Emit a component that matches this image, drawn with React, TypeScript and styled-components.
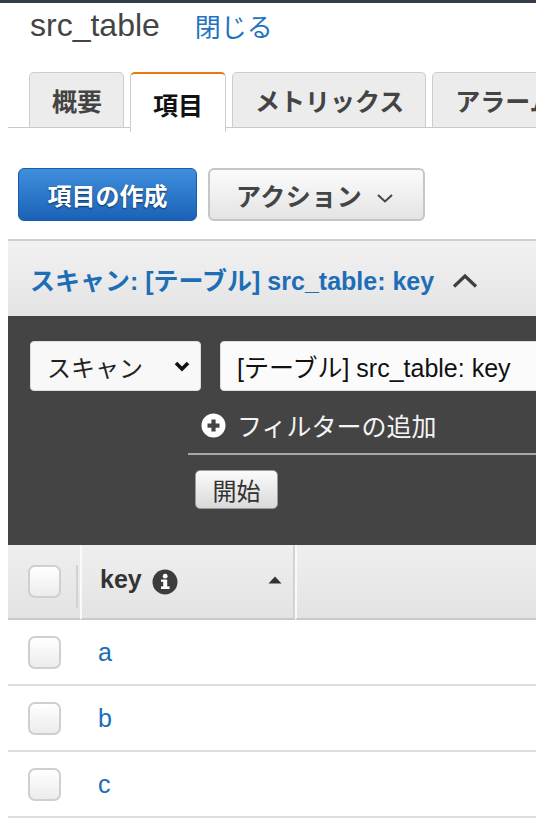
import React from "react";
import styled, { createGlobalStyle } from "styled-components";

const FONT = `"Liberation Sans", "Noto Sans CJK JP", sans-serif`;

const tabs = ["概要", "項目", "メトリックス", "アラーム"];
const items = ["a", "b", "c"];

const ChevronDown: React.FC = () => (
  <svg width="20" height="12" viewBox="0 0 20 12">
    <polyline points="3,3 10,9.5 17,3" fill="none" stroke="#444" strokeWidth="2" />
  </svg>
);

const ChevronUp: React.FC = () => (
  <svg width="26" height="14" viewBox="0 0 26 14">
    <polyline points="2,12.5 13,2 24,12.5" fill="none" stroke="#3f3f3f" strokeWidth="3.2" />
  </svg>
);

const SelectChevron: React.FC = () => (
  <svg width="18" height="12" viewBox="0 0 18 12">
    <polyline points="3,3 9,9 15,3" fill="none" stroke="#111" strokeWidth="3.6" />
  </svg>
);

const PlusCircle: React.FC = () => (
  <svg width="25" height="25" viewBox="0 0 25 25">
    <circle cx="12.5" cy="12.5" r="12" fill="#fff" />
    <rect x="6.5" y="10.5" width="12" height="4.2" fill="#444" />
    <rect x="10.4" y="6.5" width="4.2" height="12" fill="#444" />
  </svg>
);

const InfoIcon: React.FC = () => (
  <svg width="26" height="26" viewBox="0 0 26 26">
    <circle cx="13" cy="13" r="12.5" fill="#3c3c3c" />
    <circle cx="13.2" cy="7.2" r="2.4" fill="#fff" />
    <rect x="11.2" y="10.6" width="4" height="8" fill="#fff" />
    <rect x="9" y="10.6" width="3" height="2.2" fill="#fff" />
    <rect x="9" y="17.4" width="8.6" height="2.6" fill="#fff" />
  </svg>
);

const SortUp: React.FC = () => (
  <svg width="14" height="8" viewBox="0 0 14 8">
    <polygon points="7,0.5 13.5,7.5 0.5,7.5" fill="#333" />
  </svg>
);

const App: React.FC = () => {
  return (
    <Page>
      <GlobalStyle />
      <TopBar />
      <Content>
        <TitleRow>
          <Title>src_table</Title>
          <CloseLink>閉じる</CloseLink>
        </TitleRow>

        <TabBar>
          {tabs.map((tab) => (
            <Tab key={tab} $active={tab === "項目"}>
              {tab}
            </Tab>
          ))}
        </TabBar>

        <ButtonRow>
          <PrimaryButton>項目の作成</PrimaryButton>
          <SecondaryButton>
            アクション
            <ChevronDown />
          </SecondaryButton>
        </ButtonRow>

        <ScanHeader>
          <ScanTitle>スキャン: [テーブル] src_table: key</ScanTitle>
          <ChevronUp />
        </ScanHeader>

        <Panel>
          <QueryRow>
            <Select>
              スキャン
              <SelectChevron />
            </Select>
            <Input>[テーブル] src_table: key</Input>
          </QueryRow>
          <FilterBlock>
            <AddRow>
              <PlusCircle />
              フィルターの追加
            </AddRow>
            <Divider />
            <StartButton>開始</StartButton>
          </FilterBlock>
        </Panel>

        <Table>
          <HeadCell $first>
            <Checkbox />
          </HeadCell>
          <HeadCell>
            <HeadLabel>key</HeadLabel>
            <InfoIcon />
            <SortSlot>
              <SortUp />
            </SortSlot>
          </HeadCell>
          <HeadCell $last />
          {items.map((item) => (
            <React.Fragment key={item}>
              <BodyCell $center>
                <Checkbox />
              </BodyCell>
              <BodyCell>
                <KeyLink>{item}</KeyLink>
              </BodyCell>
              <BodyCell />
            </React.Fragment>
          ))}
        </Table>
      </Content>
    </Page>
  );
};

export default App;

// style
const GlobalStyle = createGlobalStyle`
  html, body {
    margin: 0;
    padding: 0;
    background: #ffffff;
  }

  body {
    font-family: ${FONT};
  }

  * {
    box-sizing: border-box;
  }
`;

const Page = styled.div`
  width: 536px;
  height: 836px;
  overflow: hidden;
`;

const TopBar = styled.div`
  height: 3px;
  background-color: #323b48;
`;

const Content = styled.div`
  padding-left: 8px;
`;

const TitleRow = styled.div`
  height: 44px;
  padding-left: 22px;

  display: flex;
  align-items: center;
  gap: 35px;
`;

const Title = styled.span`
  font-size: 32px;
  color: #444444;
`;

const CloseLink = styled.span`
  font-size: 26px;
  color: #1f73c1;
`;

const TabBar = styled.div`
  margin-top: 25px;
  padding-left: 21px;
  height: 56px;

  display: flex;
  align-items: flex-end;
  gap: 6px;
  border-bottom: 1px solid #c9c9c9;
`;

const Tab = styled.div<{ $active?: boolean }>`
  position: relative;
  flex-shrink: 0;
  height: ${(p) => (p.$active ? "60px" : "55px")};
  margin-bottom: ${(p) => (p.$active ? "-5px" : "0")};
  padding: ${(p) => (p.$active ? "1px 22px 0" : "0 21px 0 22px")};

  display: flex;
  align-items: center;
  white-space: nowrap;

  font-size: 25px;
  font-weight: 700;
  color: ${(p) => (p.$active ? "#111111" : "#444444")};

  background-color: ${(p) => (p.$active ? "#ffffff" : "#ececec")};
  border: 1px solid #cdcdcd;
  border-top: ${(p) => (p.$active ? "2px solid #e8780f" : "1px solid #cdcdcd")};
  border-bottom: none;
  border-radius: 5px 5px 0 0;
`;

const ButtonRow = styled.div`
  margin-top: 40px;
  padding-left: 10px;

  display: flex;
  gap: 11px;
`;

const PrimaryButton = styled.div`
  width: 179px;
  height: 53px;

  display: flex;
  align-items: center;
  justify-content: center;

  font-size: 24px;
  font-weight: 700;
  color: #ffffff;
  text-shadow: 0 1px 2px rgba(0, 0, 0, 0.55);

  background: linear-gradient(#3f8fdd, #1b62b6);
  border: 1px solid #1a5cab;
  border-radius: 6px;
`;

const SecondaryButton = styled.div`
  width: 217px;
  height: 53px;
  padding-left: 26px;

  display: flex;
  align-items: center;
  gap: 13px;

  font-size: 25px;
  font-weight: 700;
  color: #444444;
  letter-spacing: 0.5px;

  background: linear-gradient(#fbfbfb, #e4e4e4);
  border: 2px solid #c6c6c6;
  border-radius: 6px;

  svg {
    margin-top: 6px;
  }
`;

const ScanHeader = styled.div`
  margin-top: 18px;
  height: 77px;
  padding-left: 22px;

  display: flex;
  align-items: center;
  gap: 18px;

  background: linear-gradient(#f1f1f1, #e4e4e4);
  border-top: 2px solid #cfcfcf;

  svg {
    margin-top: 5px;
  }
`;

const ScanTitle = styled.span`
  font-size: 25px;
  font-weight: 700;
  color: #1d6eb6;
  white-space: nowrap;
`;

const Panel = styled.div`
  padding: 25px 0 36px 22px;
  background-color: #444444;
`;

const QueryRow = styled.div`
  display: flex;
  gap: 19px;
`;

const Select = styled.div`
  flex: 0 0 171px;
  height: 50px;
  padding: 0 9px 0 16px;

  display: flex;
  align-items: center;
  justify-content: space-between;

  font-size: 24px;
  color: #222222;

  background-color: #f8f8f8;
  border: 1px solid #dddddd;
  border-radius: 4px;
`;

const Input = styled.div`
  flex: 0 0 340px;
  height: 50px;
  padding-left: 16px;

  display: flex;
  align-items: center;
  white-space: nowrap;

  font-size: 25px;
  color: #111111;

  background-color: #fbfbfb;
  border: 1px solid #dddddd;
  border-radius: 4px;
`;

const FilterBlock = styled.div`
  margin-left: 158px;
`;

const AddRow = styled.div`
  height: 62px;
  padding: 6px 0 0 13px;

  display: flex;
  align-items: center;
  gap: 11px;

  font-size: 25px;
  color: #f4f4f4;
  white-space: nowrap;
`;

const Divider = styled.div`
  height: 2px;
  background-color: #a8a8a8;
`;

const StartButton = styled.div`
  width: 83px;
  height: 39px;
  margin: 15px 0 0 7px;

  display: flex;
  align-items: center;
  justify-content: center;

  font-size: 24px;
  color: #333333;

  background: linear-gradient(#fbfbfb, #d9d9d9);
  border: 1px solid #9c9c9c;
  border-radius: 5px;
`;

const Table = styled.div`
  display: grid;
  grid-template-columns: 72px 215px 1fr;
`;

const HeadCell = styled.div<{ $first?: boolean; $last?: boolean }>`
  position: relative;
  height: 75px;
  padding: ${(p) => (p.$first || p.$last ? "0" : "0 11px 0 18px")};

  display: flex;
  align-items: center;
  justify-content: ${(p) => (p.$first ? "center" : "flex-start")};
  gap: 10px;

  background: linear-gradient(#efefef, #e3e3e3);
  border-bottom: 2px solid #c9c9c9;
  border-left: ${(p) => (p.$first ? "none" : "2px solid #fafafa")};
  border-right: ${(p) => (p.$first || p.$last ? "none" : "2px solid #d3d3d3")};

  &::after {
    content: "";
    display: ${(p) => (p.$first ? "block" : "none")};
    position: absolute;
    right: 2px;
    top: 20px;
    bottom: 10px;
    width: 2px;
    background-color: #d2d2d2;
  }
`;

const HeadLabel = styled.span`
  font-size: 25px;
  font-weight: 700;
  color: #333333;
  margin-top: -4px;
`;

const SortSlot = styled.div`
  margin-left: auto;
  display: flex;
  margin-top: -4px;
`;

const BodyCell = styled.div<{ $center?: boolean }>`
  height: 66px;
  padding-left: ${(p) => (p.$center ? "0" : "18px")};

  display: flex;
  align-items: center;
  justify-content: ${(p) => (p.$center ? "center" : "flex-start")};

  border-bottom: 2px solid #dddddd;
`;

const Checkbox = styled.div`
  width: 33px;
  height: 33px;

  background: linear-gradient(#ffffff, #ececec);
  border: 2px solid #cfcfcf;
  border-radius: 7px;
`;

const KeyLink = styled.span`
  font-size: 25px;
  color: #1a6db8;
`;
